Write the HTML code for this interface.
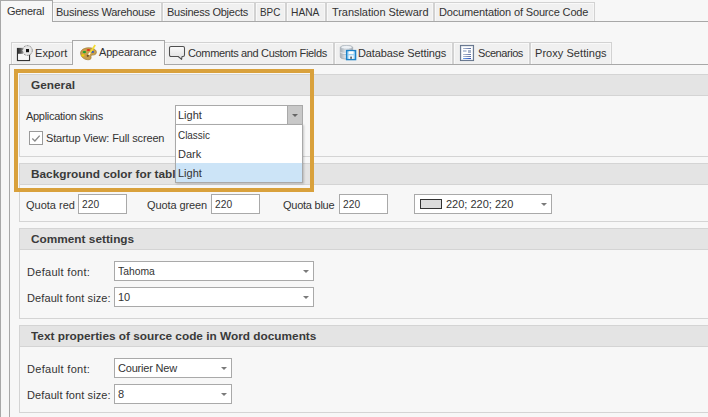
<!DOCTYPE html>
<html><head><meta charset="utf-8">
<style>
*{margin:0;padding:0;box-sizing:border-box}
html,body{width:708px;height:417px;overflow:hidden;background:#f7f7f7}
body{position:relative;font-family:"Liberation Sans",sans-serif;font-size:11px;color:#333}
.a{position:absolute}
.t{position:absolute;white-space:nowrap;line-height:13px}
.b{font-weight:bold;color:#3a3a3a;transform:scaleX(1.075);transform-origin:0 0}
.tab{position:absolute;background:#f0f0f0;border:1px solid #d2d2d2;border-bottom:none;box-shadow:inset 1px 1px 0 #f9f9f9,inset -1px 0 0 #f6f6f6}
.sel{background:#f7f7f7;border-color:#a8a8a8;box-shadow:none}
.hl{position:absolute;height:1px;background:#a8a8a8}
.vl{position:absolute;width:1px;background:#a8a8a8}
.grp{position:absolute;border:1px solid #d4d4d4}
.ghd{position:absolute;left:0;right:0;top:0;height:21px;background:#e4e4e4;border-bottom:1px solid #d4d4d4}
.box{position:absolute;background:#fff;border:1px solid #a9a9a9}
.arr{position:absolute;width:0;height:0;border-left:3px solid transparent;border-right:3px solid transparent;border-top:3px solid #7a7a7a}
</style></head><body>

<!-- outer frame -->
<div class="vl" style="left:0;top:0;height:417px"></div>
<div class="hl" style="left:52px;top:21px;width:656px"></div>

<!-- top tabs -->
<div class="tab" style="left:52px;top:2px;width:110px;height:19px"></div>
<div class="tab" style="left:162px;top:2px;width:93px;height:19px"></div>
<div class="tab" style="left:255px;top:2px;width:31px;height:19px"></div>
<div class="tab" style="left:286px;top:2px;width:40px;height:19px"></div>
<div class="tab" style="left:326px;top:2px;width:108px;height:19px"></div>
<div class="tab" style="left:434px;top:2px;width:161px;height:19px"></div>
<div class="tab sel" style="left:0;top:0;width:53px;height:22px"></div>

<!-- second tabs -->
<div class="hl" style="left:9px;top:64px;width:699px"></div>
<div class="vl" style="left:9px;top:64px;height:353px"></div>
<div class="tab" style="left:11px;top:42px;width:62px;height:22px"></div>
<div class="tab" style="left:164px;top:42px;width:170px;height:22px"></div>
<div class="tab" style="left:334px;top:42px;width:119px;height:22px"></div>
<div class="tab" style="left:453px;top:42px;width:77px;height:22px"></div>
<div class="tab" style="left:530px;top:42px;width:82px;height:22px"></div>
<div class="tab sel" style="left:72px;top:40px;width:93px;height:25px"></div>

<!-- icons -->
<svg class="a" style="left:16px;top:45px" width="18" height="17">
 <defs><linearGradient id="ex1" x1="0" y1="0" x2="1" y2="0"><stop offset="0" stop-color="#2a2a2a"/><stop offset=".6" stop-color="#555"/><stop offset="1" stop-color="#aaa"/></linearGradient></defs>
 <rect x="1.5" y="3.5" width="12" height="12" fill="#fff" stroke="#333" stroke-width="1.2"/>
 <rect x="1" y="3" width="6.5" height="5.8" fill="url(#ex1)"/>
 <rect x="2.3" y="9" width="10.4" height="5.8" fill="#f6f6f6"/>
 <circle cx="11.4" cy="5.5" r="4.9" fill="#e6e6e6"/>
 <circle cx="11.4" cy="5.5" r="4.9" fill="none" stroke="#7a7a7a" stroke-width="0.9" stroke-dasharray="2 1.1"/>
 <rect x="10" y="4" width="3" height="3.2" fill="#111"/>
</svg>
<svg class="a" style="left:79px;top:43px" width="19" height="18">
 <path d="M1.6 10 C1.6 6.5 6 4.6 10.5 4.8 C14.8 5 17.6 7 17.4 9.6 C17.2 11.6 15.2 12 13.2 12.1 C12 12.2 11.8 13.3 12.1 14.6 C12.4 16.2 10.6 17 8.4 16.7 C4.4 16.2 1.6 13.5 1.6 10 Z" fill="#c8a04c" stroke="#a07830" stroke-width="0.7"/>
 <ellipse cx="5.4" cy="9.1" rx="1.8" ry="1.1" fill="#20a02a"/>
 <ellipse cx="9.4" cy="7" rx="1.7" ry="1" fill="#e0301a"/>
 <ellipse cx="13.5" cy="8.9" rx="1.6" ry="0.9" fill="#2050d0"/>
 <ellipse cx="3.9" cy="12.4" rx="1.6" ry="1.1" fill="#f0d000"/>
 <path d="M16.2 2 L11.2 9.6" stroke="#f2dc30" stroke-width="1.7"/>
 <path d="M11.2 9.6 L9.6 11.8" stroke="#fff" stroke-width="1.5"/>
 <circle cx="8.8" cy="12.8" r="1.1" fill="#6a5028"/>
</svg>
<svg class="a" style="left:168px;top:45px" width="18" height="16">
 <defs><linearGradient id="bg1" x1="0" y1="0" x2="0" y2="1"><stop offset="0" stop-color="#fbfbfb"/><stop offset="1" stop-color="#dedede"/></linearGradient></defs>
 <path d="M3 1.5 H15 Q16.5 1.5 16.5 3 V10 Q16.5 11.5 15 11.5 H14 L13.6 14.4 L10.2 11.5 H3 Q1.5 11.5 1.5 10 V3 Q1.5 1.5 3 1.5 Z" fill="url(#bg1)" stroke="#505050" stroke-width="1.05" stroke-linejoin="round"/>
</svg>
<svg class="a" style="left:339px;top:44px" width="19" height="17">
 <defs><linearGradient id="db1" x1="0" y1="0" x2="1" y2="0"><stop offset="0" stop-color="#a4acb4"/><stop offset=".45" stop-color="#e4e8ec"/><stop offset="1" stop-color="#a0a8b0"/></linearGradient></defs>
 <path d="M1.3 3.5 C1.3 0.8 13.7 0.8 13.7 3.5 V13 C13.7 15.7 1.3 15.7 1.3 13 Z" fill="url(#db1)" stroke="#a4acb4" stroke-width="0.8"/>
 <ellipse cx="7.5" cy="3.3" rx="5.6" ry="1.8" fill="#eef2f6" stroke="#b4bcc4" stroke-width="0.6"/>
 <path d="M1.5 8.3 C3 10 12 10 13.5 8.3" fill="none" stroke="#f4f6f8" stroke-width="1"/>
 <path d="M1.5 9.3 C3 11 12 11 13.5 9.3" fill="none" stroke="#a8b0b8" stroke-width="0.6"/>
 <rect x="7.6" y="6.6" width="9" height="9" fill="#9ed2f4" stroke="#1c82c8" stroke-width="1.4"/>
 <rect x="9.6" y="7.3" width="5" height="2.6" fill="#fff"/>
 <rect x="9.6" y="11.3" width="5" height="3.6" fill="#f0f8fe"/>
 <rect x="11.4" y="12.6" width="1.3" height="2.2" fill="#333"/>
</svg>
<svg class="a" style="left:459px;top:44px" width="17" height="18">
 <defs><linearGradient id="sc1" x1="0" y1="0" x2="1" y2="0"><stop offset="0" stop-color="#b4c0d4"/><stop offset="1" stop-color="#5a6ca0"/></linearGradient>
 <linearGradient id="sc2" x1="0" y1="0" x2="1" y2="0"><stop offset="0" stop-color="#70a8f0"/><stop offset="1" stop-color="#2a48b0"/></linearGradient></defs>
 <rect x="1.5" y="1.5" width="13" height="15" fill="#fff" stroke="#607088" stroke-width="1.1"/>
 <rect x="2.2" y="2.2" width="11.6" height="13.6" fill="none" stroke="#d0d8e4" stroke-width="0.6"/>
 <rect x="4" y="4" width="8" height="1" fill="url(#sc1)"/>
 <rect x="4" y="6" width="3.5" height="2" fill="#bcc8dc"/>
 <rect x="9" y="6" width="3" height="3" fill="#a8b4cc"/>
 <rect x="4" y="10" width="8" height="1" fill="url(#sc1)"/>
 <rect x="4" y="12" width="8" height="1" fill="url(#sc1)"/>
 <rect x="4" y="14" width="8" height="1" fill="url(#sc2)"/>
</svg>

<!-- group General -->
<div class="grp" style="left:19px;top:74px;width:700px;height:83px"><div class="ghd"></div></div>
<div class="a" style="left:29px;top:131px;width:14px;height:14px;border:1px solid #9a9a9a;background:#fff"></div>
<svg class="a" style="left:29px;top:131px" width="14" height="14"><path d="M3.3 7.6 L5.9 10 L10.7 4.6" fill="none" stroke="#8a8a8a" stroke-width="1.35"/></svg>

<!-- group Background -->
<div class="grp" style="left:19px;top:163px;width:700px;height:59px"><div class="ghd"></div></div>
<div class="box" style="left:78px;top:194px;width:49px;height:20px"></div>
<div class="box" style="left:211px;top:194px;width:49px;height:20px"></div>
<div class="box" style="left:339px;top:194px;width:49px;height:20px"></div>
<div class="box" style="left:414px;top:194px;width:138px;height:20px"></div>
<div class="a" style="left:420px;top:199px;width:22px;height:10px;background:#dcdcdc;border:1px solid #333"></div>
<div class="arr" style="left:541px;top:203px"></div>

<!-- group Comment settings -->
<div class="grp" style="left:19px;top:228px;width:700px;height:91px"><div class="ghd"></div></div>
<div class="box" style="left:114px;top:261px;width:200px;height:20px"></div>
<div class="arr" style="left:303px;top:270px"></div>
<div class="box" style="left:114px;top:287px;width:200px;height:20px"></div>
<div class="arr" style="left:303px;top:296px"></div>

<!-- group Text properties -->
<div class="grp" style="left:19px;top:325px;width:700px;height:88px"><div class="ghd"></div></div>
<div class="box" style="left:114px;top:358px;width:118px;height:20px"></div>
<div class="arr" style="left:221px;top:367px"></div>
<div class="box" style="left:114px;top:384px;width:118px;height:20px"></div>
<div class="arr" style="left:221px;top:393px"></div>

<div class="t " id="t0" style="left:7px;top:5px;letter-spacing:-0.3px">General</div>
<div class="t " id="t1" style="left:56px;top:6px;letter-spacing:-0.25px">Business Warehouse</div>
<div class="t " id="t2" style="left:167px;top:6px;letter-spacing:-0.25px">Business Objects</div>
<div class="t " id="t3" style="left:260px;top:6px;letter-spacing:0px;transform:scaleX(0.9);transform-origin:0 0">BPC</div>
<div class="t " id="t4" style="left:291px;top:6px;letter-spacing:0px;transform:scaleX(0.93);transform-origin:0 0">HANA</div>
<div class="t " id="t5" style="left:332px;top:6px;letter-spacing:-0.05px">Translation Steward</div>
<div class="t " id="t6" style="left:439px;top:6px;letter-spacing:-0.15px">Documentation of Source Code</div>
<div class="t " id="t7" style="left:35px;top:47px;letter-spacing:0.1px">Export</div>
<div class="t " id="t8" style="left:99px;top:46px;letter-spacing:-0.2px">Appearance</div>
<div class="t " id="t9" style="left:188px;top:47px;letter-spacing:-0.35px">Comments and Custom Fields</div>
<div class="t " id="t10" style="left:358px;top:47px;letter-spacing:-0.1px">Database Settings</div>
<div class="t " id="t11" style="left:478px;top:47px;letter-spacing:-0.45px">Scenarios</div>
<div class="t " id="t12" style="left:535px;top:47px;letter-spacing:0.05px">Proxy Settings</div>
<div class="t b" id="t13" style="left:31px;top:79px;letter-spacing:0px">General</div>
<div class="t " id="t14" style="left:26px;top:110px;letter-spacing:-0.3px">Application skins</div>
<div class="t " id="t15" style="left:46px;top:132px;letter-spacing:-0.15px">Startup View: Full screen</div>
<div class="t b" id="t16" style="left:31px;top:168px;letter-spacing:0px">Background color for tables</div>
<div class="t " id="t17" style="left:26px;top:199px;letter-spacing:0px">Quota red</div>
<div class="t " id="t18" style="left:82px;top:198px;letter-spacing:0px;transform:scaleX(0.93);transform-origin:0 0">220</div>
<div class="t " id="t19" style="left:147px;top:199px;letter-spacing:-0.1px">Quota green</div>
<div class="t " id="t20" style="left:215px;top:198px;letter-spacing:0px;transform:scaleX(0.93);transform-origin:0 0">220</div>
<div class="t " id="t21" style="left:283px;top:199px;letter-spacing:-0.25px">Quota blue</div>
<div class="t " id="t22" style="left:343px;top:198px;letter-spacing:0px;transform:scaleX(0.93);transform-origin:0 0">220</div>
<div class="t " id="t23" style="left:446px;top:198px;letter-spacing:0px">220; 220; 220</div>
<div class="t b" id="t24" style="left:31px;top:233px;letter-spacing:0px">Comment settings</div>
<div class="t " id="t25" style="left:27px;top:266px;letter-spacing:0.3px">Default font:</div>
<div class="t " id="t26" style="left:118px;top:265px;letter-spacing:0px;transform:scaleX(0.94);transform-origin:0 0">Tahoma</div>
<div class="t " id="t27" style="left:27px;top:292px;letter-spacing:0.1px">Default font size:</div>
<div class="t " id="t28" style="left:118px;top:291px;letter-spacing:0px">10</div>
<div class="t b" id="t29" style="left:31px;top:330px;letter-spacing:0px">Text properties of source code in Word documents</div>
<div class="t " id="t30" style="left:27px;top:363px;letter-spacing:0.3px">Default font:</div>
<div class="t " id="t31" style="left:118px;top:362px;letter-spacing:-0.2px">Courier New</div>
<div class="t " id="t32" style="left:27px;top:389px;letter-spacing:0.1px">Default font size:</div>
<div class="t " id="t33" style="left:118px;top:388px;letter-spacing:0px">8</div>
<!-- application skins combo + dropdown -->
<div class="box" style="left:175px;top:105px;width:128px;height:20px"></div>
<div class="a" style="left:287px;top:105px;width:16px;height:20px;background:#c8c8c8;border:1px solid #a9a9a9"></div>
<div class="arr" style="left:292px;top:114px;border-left-width:3px;border-right-width:3px;border-top:3px solid #666"></div>
<div class="box" style="left:175px;top:124px;width:128px;height:59px;box-shadow:1px 1px 2px rgba(0,0,0,.2)"></div>
<div class="a" style="left:176px;top:163px;width:126px;height:19px;background:#cce4f7"></div>

<div class="t " id="d0" style="left:178px;top:109px;letter-spacing:0px">Light</div>
<div class="t " id="d1" style="left:178px;top:129px;letter-spacing:0px;transform:scaleX(0.9);transform-origin:0 0">Classic</div>
<div class="t " id="d2" style="left:178px;top:148px;letter-spacing:0px">Dark</div>
<div class="t " id="d3" style="left:178px;top:167px;letter-spacing:0px">Light</div>
<!-- orange highlight -->
<div class="a" style="left:14px;top:69px;width:300px;height:123px;border:4px solid #d9a13c"></div>

</body></html>
